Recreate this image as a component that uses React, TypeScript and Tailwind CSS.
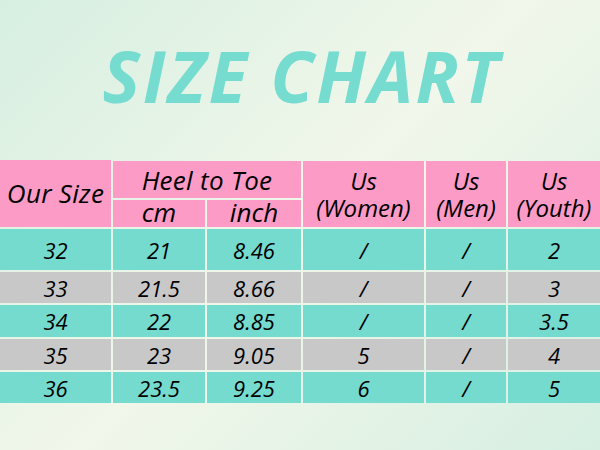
import React from "react";

const rows = [
  ["32", "21", "8.46", "/", "/", "2"],
  ["33", "21.5", "8.66", "/", "/", "3"],
  ["34", "22", "8.85", "/", "/", "3.5"],
  ["35", "23", "9.05", "5", "/", "4"],
  ["36", "23.5", "9.25", "6", "/", "5"],
];

export default function App() {
  const font = { fontFamily: '"Open Sans", "Noto Sans", sans-serif' };
  return (
    <div
      className="w-[600px] h-[450px] overflow-hidden bg-[linear-gradient(135deg,#d6efe1_0%,#f1f7ea_50%,#d6efe2_100%)] text-black italic"
      style={font}
    >
      <div className="h-[160px] flex items-center justify-center pb-[10px] pl-[4px]">
        <h1 className="text-[71px] font-bold italic text-[#77dcd0] tracking-[2.5px] leading-none">
          SIZE CHART
        </h1>
      </div>
      <div className="grid grid-cols-[111px_92px_94px_121px_80px_92px] grid-rows-[37px_27px_41px_31px_32px_31px_31px] gap-x-[2px] gap-y-[2px] mt-[1px]">
        <div className="row-span-2 bg-[#fc9bc6] flex items-center justify-center text-[26px] tracking-[0.3px] -mt-[1px]">
          Our Size
        </div>
        <div className="col-span-2 bg-[#fc9bc6] flex items-center justify-center text-[26px] tracking-[0.3px] leading-none pt-[1px]">
          Heel to Toe
        </div>
        <div className="row-span-2 bg-[#fc9bc6] flex flex-col items-center justify-center text-[24px] leading-[27px]">
          <span>Us</span>
          <span>(Women)</span>
        </div>
        <div className="row-span-2 bg-[#fc9bc6] flex flex-col items-center justify-center text-[24px] leading-[27px]">
          <span>Us</span>
          <span>(Men)</span>
        </div>
        <div className="row-span-2 bg-[#fc9bc6] flex flex-col items-center justify-center text-[24px] leading-[27px]">
          <span>Us</span>
          <span>(Youth)</span>
        </div>
        <div className="bg-[#fc9bc6] flex items-center justify-center text-[26px] leading-none pb-[4px]">
          cm
        </div>
        <div className="bg-[#fc9bc6] flex items-center justify-center text-[26px] leading-none pb-[4px]">
          inch
        </div>
        {rows.map((r, i) =>
          r.map((c, j) => (
            <div
              key={`${i}-${j}`}
              className={`flex items-center justify-center text-[22px] leading-none ${
                i % 2 === 0 ? "bg-[#76dbcf]" : "bg-[#c8c8c8]"
              }`}
            >
              {c}
            </div>
          ))
        )}
      </div>
    </div>
  );
}
